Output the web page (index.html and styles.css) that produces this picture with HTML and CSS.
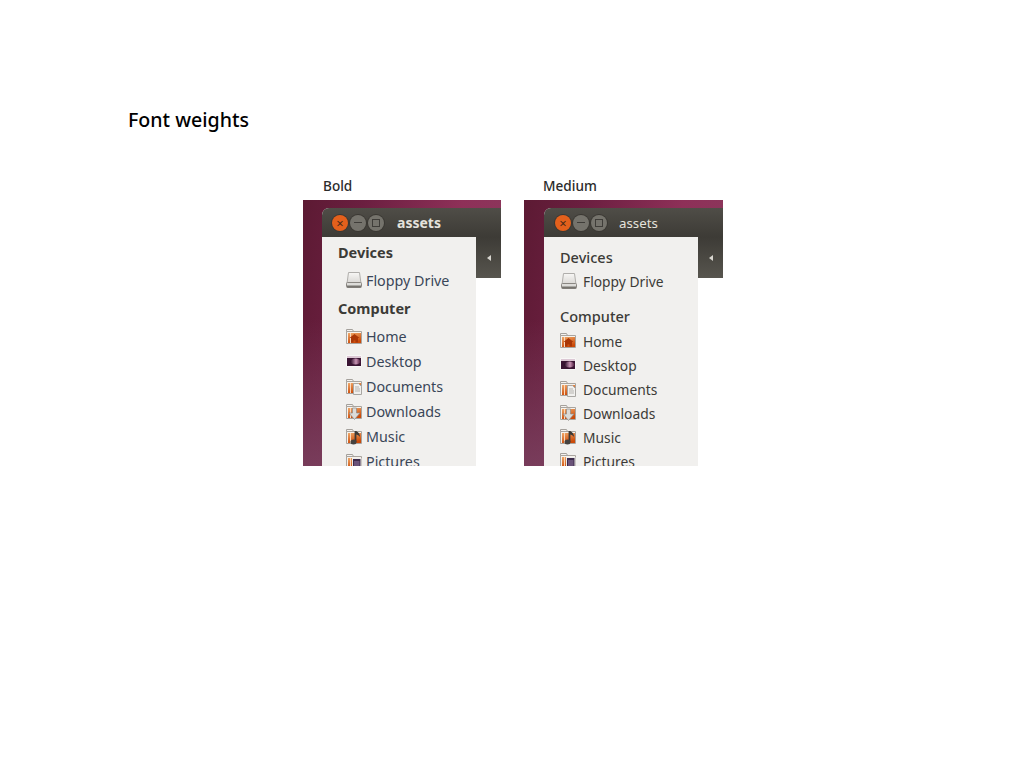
FILE: index.html
```html
<!DOCTYPE html>
<html lang="en">
<head>
  <meta charset="UTF-8">
  <meta name="viewport" content="width=device-width, initial-scale=1.0">
  <title>Font weights</title>
  <link rel="stylesheet" href="styles.css">
</head>
<body>
  <svg class="icon-defs" width="0" height="0">
    <defs>
      <linearGradient id="folder-fill" x1="0" y1="0" x2="0.4" y2="1">
        <stop offset="0" stop-color="#f0a868"/>
        <stop offset="1" stop-color="#cc4a08"/>
      </linearGradient>
      <linearGradient id="desk-fill" x1="0" y1="0" x2="1" y2="0">
        <stop offset="0" stop-color="#2c0f2a"/>
        <stop offset="0.55" stop-color="#c894b4"/>
        <stop offset="1" stop-color="#4b1a3c"/>
      </linearGradient>
      <linearGradient id="floppy-fill" x1="0" y1="0" x2="0" y2="1">
        <stop offset="0" stop-color="#f8f7f5"/>
        <stop offset="1" stop-color="#d8d6d3"/>
      </linearGradient>
      <symbol id="i-folder" viewBox="0 0 16 16">
        <path d="M.5 .5h6l1 2h5v4h-12z" fill="#f4f2ef" stroke="#a5a19c"/>
        <path d="M.5 2.500h15v12H.5z" fill="#f6f2ec" stroke="#a9a49e"/>
        <rect x="2" y="4" width="13" height="10" fill="url(#folder-fill)"/>
        <rect x="4" y="4" width="1" height="10" fill="#f8d8bc"/>
      </symbol>
      <symbol id="i-floppy" viewBox="0 0 18 18">
        <path d="M3.500 1.500h11l1.500 11H2z" fill="url(#floppy-fill)" stroke="#b0aeab"/>
        <rect x="1.500" y="11.500" width="15" height="5" rx="1" fill="#dddcd9" stroke="#8a8782"/>
        <rect x="2" y="14.500" width="14" height="2" fill="#77746f"/>
      </symbol>
      <symbol id="i-home" viewBox="0 0 16 16">
        <use href="#i-folder" width="16" height="16"/>
        <path d="M8.500 5l5 4h-1.500v4.500h-2.500v-2h-2v2H5V9H3.500z" fill="#a93606"/>
      </symbol>
      <symbol id="i-desktop" viewBox="0 0 16 16">
        <rect x=".5" y="1.500" width="15" height="11" fill="#fff"/>
        <rect x="1" y="2" width="14" height="10" fill="#3a1533"/>
        <rect x="1" y="2" width="14" height="2" fill="#dcc8d4"/>
        <ellipse cx="9.500" cy="7.500" rx="5" ry="3" fill="url(#desk-fill)"/>
      </symbol>
      <symbol id="i-documents" viewBox="0 0 16 16">
        <use href="#i-folder" width="16" height="16"/>
        <path d="M7.500 4.500h5l3 3v8h-8z" fill="#f1f0ee" stroke="#a8a6a2"/>
        <path d="M9 8h4M9 10h5M9 12h5" stroke="#b5b3af"/>
      </symbol>
      <symbol id="i-downloads" viewBox="0 0 16 16">
        <use href="#i-folder" width="16" height="16"/>
        <path d="M6.500 4h4v5h3.500l-5.500 6.500L3 9h3.500z" fill="#dcdbd8" stroke="#8d8b87" stroke-width=".7"/>
      </symbol>
      <symbol id="i-music" viewBox="0 0 16 16">
        <use href="#i-folder" width="16" height="16"/>
        <path d="M9.500 2v11" stroke="#3b3936" stroke-width="1.800"/>
        <path d="M10 2c2.500 1 4 3 4 6-1-1.500-2.500-2.500-4-2.500z" fill="#3b3936"/>
        <ellipse cx="7.500" cy="13" rx="3" ry="2.500" fill="#45423f"/>
      </symbol>
      <symbol id="i-pictures" viewBox="0 0 16 16">
        <use href="#i-folder" width="16" height="16"/>
        <rect x="6.500" y="4.500" width="8.500" height="10.500" fill="#3c2a4a" stroke="#eeecea"/>
        <rect x="8" y="7" width="5.500" height="6.500" fill="#6a5379"/>
      </symbol>
    </defs>
  </svg>

  <h1 class="page-title">Font weights</h1>

  <div class="figures">
    <figure class="figure figure-bold">
      <figcaption>Bold</figcaption>
      <div class="shot">
        <div class="window">
          <div class="titlebar">
            <span class="btn btn-close">&times;</span>
            <span class="btn"><i class="glyph-min"></i></span>
            <span class="btn"><i class="glyph-max"></i></span>
            <span class="title">assets</span>
          </div>
          <div class="window-body">
            <div class="sidebar">
              <h2>Devices</h2>
              <div class="place"><svg class="floppy"><use href="#i-floppy"/></svg>Floppy Drive</div>
              <h2>Computer</h2>
              <div class="place"><svg><use href="#i-home"/></svg>Home</div>
              <div class="place"><svg><use href="#i-desktop"/></svg>Desktop</div>
              <div class="place"><svg><use href="#i-documents"/></svg>Documents</div>
              <div class="place"><svg><use href="#i-downloads"/></svg>Downloads</div>
              <div class="place"><svg><use href="#i-music"/></svg>Music</div>
              <div class="place"><svg><use href="#i-pictures"/></svg>Pictures</div>
            </div>
            <div class="toolbar"><span class="arrow"></span></div>
          </div>
        </div>
      </div>
    </figure>

    <figure class="figure figure-medium">
      <figcaption>Medium</figcaption>
      <div class="shot">
        <div class="window">
          <div class="titlebar">
            <span class="btn btn-close">&times;</span>
            <span class="btn"><i class="glyph-min"></i></span>
            <span class="btn"><i class="glyph-max"></i></span>
            <span class="title">assets</span>
          </div>
          <div class="window-body">
            <div class="sidebar">
              <h2>Devices</h2>
              <div class="place"><svg class="floppy"><use href="#i-floppy"/></svg>Floppy Drive</div>
              <h2>Computer</h2>
              <div class="place"><svg><use href="#i-home"/></svg>Home</div>
              <div class="place"><svg><use href="#i-desktop"/></svg>Desktop</div>
              <div class="place"><svg><use href="#i-documents"/></svg>Documents</div>
              <div class="place"><svg><use href="#i-downloads"/></svg>Downloads</div>
              <div class="place"><svg><use href="#i-music"/></svg>Music</div>
              <div class="place"><svg><use href="#i-pictures"/></svg>Pictures</div>
            </div>
            <div class="toolbar"><span class="arrow"></span></div>
          </div>
        </div>
      </div>
    </figure>
  </div>
</body>
</html>
```

FILE: styles.css
```css
body {
  margin: 0;
  padding: 107px 0 0 128px;
  background: #fff;
  color: #000;
  font-family: "Noto Sans", "Open Sans", sans-serif;
}

.icon-defs {
  display: block;
}

.page-title {
  margin: 0;
  font-size: 19.6px;
  line-height: 26px;
  font-weight: 500;
}

.figures {
  display: flex;
  gap: 23px;
  margin: 45px 0 0 175px;
}

.figure {
  margin: 0;
  width: 198px;
}

.figure figcaption {
  height: 22px;
  padding-left: 20px;
  font-size: 13.6px;
  line-height: 16px;
  font-weight: 500;
  color: #2b2b2b;
}

.figure-medium figcaption {
  padding-left: 19px;
}

.shot {
  height: 266px;
  padding: 8px 0 0 19px;
  box-sizing: border-box;
  overflow: hidden;
  background:
    linear-gradient(to bottom, rgba(120, 60, 90, 0) 45%, rgba(125, 70, 100, 0.75) 100%),
    linear-gradient(100deg, #5c1a33 0%, #6b1f40 25%, #8e3058 65%, #8a3a5e 100%);
}

.figure-medium .shot {
  width: 199px;
  padding-left: 20px;
}

.window {
  width: 179px;
  height: 258px;
  background: #fff;
  border-radius: 7px 0 0 0;
}

.titlebar {
  display: flex;
  align-items: center;
  height: 29px;
  padding-left: 10px;
  box-sizing: border-box;
  border-radius: 7px 0 0 0;
  background: linear-gradient(to bottom, #4f4d47, #3d3b36);
}

.figure-medium .titlebar {
  padding-left: 11px;
}

.btn {
  display: flex;
  align-items: center;
  justify-content: center;
  width: 16px;
  height: 16px;
  margin-right: 2px;
  border-radius: 50%;
  background: #75736c;
  box-shadow: 0 0 0 1px #3a3833;
}

.btn-close {
  background: #e4601c;
  color: #4a2a18;
  font-size: 13px;
  line-height: 16px;
}

.glyph-min {
  width: 8px;
  height: 1px;
  background: #3f3d39;
}

.glyph-max {
  width: 6px;
  height: 6px;
  border: 1px solid #3f3d39;
}

.title {
  margin-left: 11px;
  font-size: 14px;
  color: #e4e2dc;
}

.figure-medium .title {
  margin-left: 10px;
  font-size: 13.3px;
}

.figure-bold .title {
  font-weight: 700;
}

.window-body {
  display: flex;
  align-items: flex-start;
}

.sidebar {
  width: 154px;
  height: 229px;
  flex: none;
  overflow: hidden;
  background: #f1f0ee;
  color: #3c3b37;
}

.sidebar h2 {
  margin: 0;
  font-size: 14.5px;
  color: #3c3b37;
}

.place {
  display: flex;
  align-items: center;
  font-size: 14.3px;
  white-space: nowrap;
}

.place svg {
  width: 16px;
  height: 16px;
  flex: none;
}

.place svg.floppy {
  width: 18px;
  height: 18px;
}

.figure-bold .sidebar {
  padding: 3px 0 0 16px;
  box-sizing: border-box;
}

.figure-bold .sidebar h2 {
  height: 24px;
  line-height: 24px;
  font-weight: 700;
}

.figure-bold .sidebar h2:nth-of-type(2) {
  height: 28px;
}

.figure-bold .place {
  height: 25px;
  padding-left: 8px;
  gap: 4px;
  color: #3a4658;
}

.figure-bold .place svg.floppy {
  margin-left: -1px;
  margin-right: -1px;
}

.figure-bold .place:nth-of-type(1) {
  height: 32px;
}

.figure-medium .sidebar {
  padding: 9px 0 0 16px;
  box-sizing: border-box;
}

.figure-medium .sidebar h2 {
  height: 22px;
  line-height: 22px;
  font-weight: 500;
}

.figure-medium .sidebar h2:nth-of-type(2) {
  height: 24px;
}

.figure-medium .place {
  height: 24px;
  gap: 7px;
  font-size: 13.8px;
}

.figure-medium .place:nth-of-type(1) {
  height: 37px;
  padding-bottom: 11px;
  box-sizing: border-box;
}

.figure-medium .place svg.floppy {
  margin-right: -2px;
}

.toolbar {
  display: flex;
  align-items: center;
  width: 25px;
  height: 41px;
  padding-left: 11px;
  box-sizing: border-box;
  background: linear-gradient(to bottom, #3d3b36, #57554e);
}

.arrow {
  width: 0;
  height: 0;
  border-top: 3px solid transparent;
  border-bottom: 3px solid transparent;
  border-right: 4px solid #d8d6d0;
}
```
